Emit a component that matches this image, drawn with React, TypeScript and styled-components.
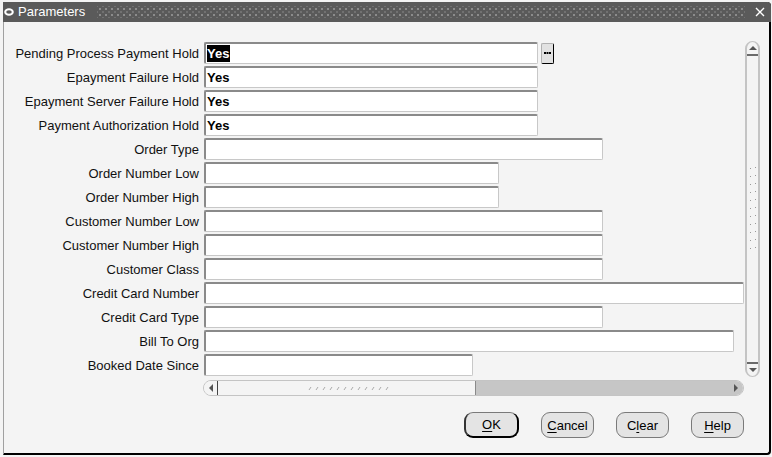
import { FunctionComponent } from 'react';
import styled, { createGlobalStyle } from 'styled-components';

const GlobalStyle = createGlobalStyle`
  html, body {
    margin: 0;
    padding: 0;
    background: #f4f4f4;
  }
  body {
    font-family: "Liberation Sans", Arial, sans-serif;
    font-size: 12px;
    color: #000;
  }
`;

const Page = styled.div`
  width: 772px;
  height: 457px;
  overflow: hidden;
  background: #f4f4f4;
`;

const Window = styled.div`
  margin: 2px 0 0 3px;
  width: 765px;
  height: 451px;
  border-left: 1px solid #a0a0a0;
  border-right: 2px solid #000;
  border-bottom: 2px solid #000;
  border-bottom-right-radius: 4px;
  border-top-right-radius: 4px;
  display: flex;
  flex-direction: column;
`;

const TitleBar = styled.div`
  height: 20px;
  margin-left: -1px;
  margin-right: -2px;
  background: #5a5a5a;
  border-top-right-radius: 4px;
  display: flex;
  align-items: center;
  padding: 0 6px 0 1px;
  gap: 4px;
  color: #fff;
`;

const TitleText = styled.span`
  font-size: 13px;
  line-height: 20px;
  margin-right: 8px;
`;

const DottedFill = styled.div`
  flex: 1;
  height: 12px;
  background-image:
    radial-gradient(circle, #a8a8a8 0.6px, transparent 0.9px),
    radial-gradient(circle, #7e7e7e 0.6px, transparent 0.9px);
  background-size: 6px 6px, 6px 6px;
  background-position: 0 0, 3px 3px;
`;

const CloseButton = styled.span`
  display: flex;
  align-items: center;
  margin-left: 6px;
`;

const Body = styled.div`
  flex: 1;
  display: flex;
  flex-direction: column;
  padding-top: 19px;
`;

const ScrollArea = styled.div`
  display: flex;
  align-items: flex-start;
`;

const Viewport = styled.div`
  width: 741px;
  height: 336px;
  overflow: hidden;
  display: flex;
  flex-direction: column;
  gap: 2px;
  padding-top: 1px;
`;

const Row = styled.div`
  display: flex;
  align-items: center;
  height: 22px;
`;

const Label = styled.div`
  width: 195px;
  text-align: right;
  padding-right: 5px;
  padding-top: 1px;
  white-space: nowrap;
  font-size: 13px;
  color: #111;
`;

const Field = styled.div<{ $width: number }>`
  width: ${p => p.$width}px;
  height: 22px;
  box-sizing: border-box;
  flex-shrink: 0;
  background: #fff;
  border-top: 2px solid #8a8a8a;
  border-left: 2px solid #8a8a8a;
  border-bottom: 1px solid #c8c8c8;
  border-right: 1px solid #c8c8c8;
  border-radius: 2px;
  display: flex;
  align-items: center;
  padding-left: 1px;
  font-weight: bold;
  font-size: 13px;
`;

const Value = styled.span<{ $selected?: boolean }>`
  padding: 1px 1px 0 0;
  line-height: 16px;
  background: ${p => (p.$selected ? '#000' : 'transparent')};
  color: ${p => (p.$selected ? '#fff' : '#000')};
`;

const LovButton = styled.div`
  width: 13px;
  height: 21px;
  margin-left: 3px;
  box-sizing: border-box;
  background: #e2e2e2;
  border-top: 1px solid #b0b0b0;
  border-left: 1px solid #b0b0b0;
  border-right: 1px solid #000;
  border-bottom: 1px solid #000;
  border-radius: 2px;
  display: flex;
  align-items: center;
  justify-content: center;
`;

const VScroll = styled.div`
  width: 15px;
  height: 336px;
  box-sizing: border-box;
  border: 1px solid #c4c4c4;
  border-width: 1px 2px 1px 2px;
  border-radius: 8px;
  display: flex;
  flex-direction: column;
  justify-content: space-between;
  align-items: center;
`;

const VArrow = styled.div<{ $bottom?: boolean }>`
  width: 100%;
  height: 14px;
  box-sizing: border-box;
  display: flex;
  align-items: center;
  justify-content: center;
  ${p => (p.$bottom ? 'border-top: 2px solid #6a6a6a;' : 'border-bottom: 2px solid #6a6a6a;')}
`;

const HScroll = styled.div`
  margin: 2px 0 0 199px;
  width: 541px;
  height: 16px;
  box-sizing: border-box;
  border: 1px solid #c4c4c4;
  border-radius: 8px;
  display: flex;
  overflow: hidden;
`;

const HThumb = styled.div`
  width: 272px;
  box-sizing: border-box;
  display: flex;
  align-items: center;
  border-right: 1px solid #8a8a8a;
  background: #f4f4f4;
`;

const HArrow = styled.div<{ $right?: boolean }>`
  width: 14px;
  height: 100%;
  box-sizing: border-box;
  display: flex;
  align-items: center;
  justify-content: center;
  ${p => (p.$right ? '' : 'border-right: 1px solid #444;')}
`;

const HTrack = styled.div`
  flex: 1;
  background: #c6c6c6;
  display: flex;
  justify-content: flex-end;
`;

const ButtonBar = styled.div`
  display: flex;
  justify-content: flex-end;
  gap: 22px;
  margin-top: 16px;
  padding-right: 25px;
`;

const PillButton = styled.button<{ $default?: boolean; $width: number }>`
  width: ${p => p.$width}px;
  height: 26px;
  box-sizing: border-box;
  background: #e4e4e4;
  border: 1px solid #7a7a7a;
  border-radius: 9px;
  font-family: "Liberation Sans", Arial, sans-serif;
  font-size: 13px;
  color: #000;
  padding: 0;
  ${p =>
    p.$default
      ? 'border-right: 2px solid #000; border-bottom: 2px solid #000; border-left: 2px solid #333;'
      : ''}

  & u {
    text-decoration: underline;
    text-underline-offset: 2px;
  }
`;

type FieldDef = { label: string; width: number; value?: string; lov?: boolean };

const fields: FieldDef[] = [
  { label: 'Pending Process Payment Hold', width: 334, value: 'Yes', lov: true },
  { label: 'Epayment Failure Hold', width: 334, value: 'Yes' },
  { label: 'Epayment Server Failure Hold', width: 334, value: 'Yes' },
  { label: 'Payment Authorization Hold', width: 334, value: 'Yes' },
  { label: 'Order Type', width: 399 },
  { label: 'Order Number Low', width: 295 },
  { label: 'Order Number High', width: 295 },
  { label: 'Customer Number Low', width: 399 },
  { label: 'Customer Number High', width: 399 },
  { label: 'Customer Class', width: 399 },
  { label: 'Credit Card Number', width: 540 },
  { label: 'Credit Card Type', width: 399 },
  { label: 'Bill To Org', width: 530 },
  { label: 'Booked Date Since', width: 269 },
];

const Tri: FunctionComponent<{ dir: 'up' | 'down' | 'left' | 'right' }> = ({ dir }) => {
  const pts = {
    up: '0,5 4,1 8,5',
    down: '0,1 8,1 4,5',
    left: '5,0 5,8 1,4',
    right: '1,0 1,8 5,4',
  }[dir];
  const vertical = dir === 'up' || dir === 'down';
  return (
    <svg width={vertical ? 8 : 6} height={vertical ? 6 : 8} viewBox={vertical ? '0 0 8 6' : '0 0 6 8'}>
      <polygon points={pts} fill="#555" />
    </svg>
  );
};

// little diagonal tick marks used as the grip of the scroll thumbs
const Grip: FunctionComponent<{ vertical?: boolean }> = ({ vertical }) => {
  const marks = [];
  if (vertical) {
    for (let i = 0; i < 11; i++) {
      marks.push(<path key={`a${i}`} d={`M1 ${i * 8 + 3} L2 ${i * 8 + 2}`} />);
      marks.push(<path key={`b${i}`} d={`M6 ${i * 8 + 2} L7 ${i * 8 + 1}`} />);
    }
    return (
      <svg width="8" height="86" viewBox="0 0 8 86" stroke="#999" strokeWidth="1" fill="none">
        {marks}
      </svg>
    );
  }
  for (let i = 0; i < 12; i++) {
    marks.push(<path key={i} d={`M${i * 7 + 1} 5 L${i * 7 + 3} 2`} />);
  }
  return (
    <svg width="84" height="6" viewBox="0 0 84 6" stroke="#aaa" strokeWidth="1" fill="none" style={{ marginLeft: 90 }}>
      {marks}
    </svg>
  );
};

export default function App() {
  return (
    <Page>
      <GlobalStyle />
      <Window>
        <TitleBar>
          <svg width="10" height="8" viewBox="0 0 10 8">
            <ellipse cx="5" cy="4" rx="3.8" ry="2.7" fill="none" stroke="#fff" strokeWidth="2" />
          </svg>
          <TitleText>Parameters</TitleText>
          <DottedFill />
          <CloseButton>
            <svg width="10" height="10" viewBox="0 0 10 10">
              <path d="M1 1 L9 9 M9 1 L1 9" stroke="#fff" strokeWidth="1.4" />
            </svg>
          </CloseButton>
        </TitleBar>

        <Body>
          <ScrollArea>
            <Viewport>
              {fields.map((f, i) => (
                <Row key={f.label}>
                  <Label>{f.label}</Label>
                  <Field $width={f.width}>
                    {f.value && <Value $selected={i === 0}>{f.value}</Value>}
                  </Field>
                  {f.lov && (
                    <LovButton>
                      <svg width="7" height="2" viewBox="0 0 7 2">
                        <rect x="0" y="0" width="2" height="2" fill="#000" />
                        <rect x="2.5" y="0" width="2" height="2" fill="#000" />
                        <rect x="5" y="0" width="2" height="2" fill="#000" />
                      </svg>
                    </LovButton>
                  )}
                </Row>
              ))}
            </Viewport>
            <VScroll>
              <VArrow>
                <Tri dir="up" />
              </VArrow>
              <Grip vertical />
              <VArrow $bottom>
                <Tri dir="down" />
              </VArrow>
            </VScroll>
          </ScrollArea>

          <HScroll>
            <HThumb>
              <HArrow>
                <Tri dir="left" />
              </HArrow>
              <Grip />
            </HThumb>
            <HTrack>
              <HArrow $right>
                <Tri dir="right" />
              </HArrow>
            </HTrack>
          </HScroll>

          <ButtonBar>
            <PillButton $default $width={55}>
              <u>O</u>K
            </PillButton>
            <PillButton $width={53}>
              <u>C</u>ancel
            </PillButton>
            <PillButton $width={53}>
              C<u>l</u>ear
            </PillButton>
            <PillButton $width={53}>
              <u>H</u>elp
            </PillButton>
          </ButtonBar>
        </Body>
      </Window>
    </Page>
  );
}
